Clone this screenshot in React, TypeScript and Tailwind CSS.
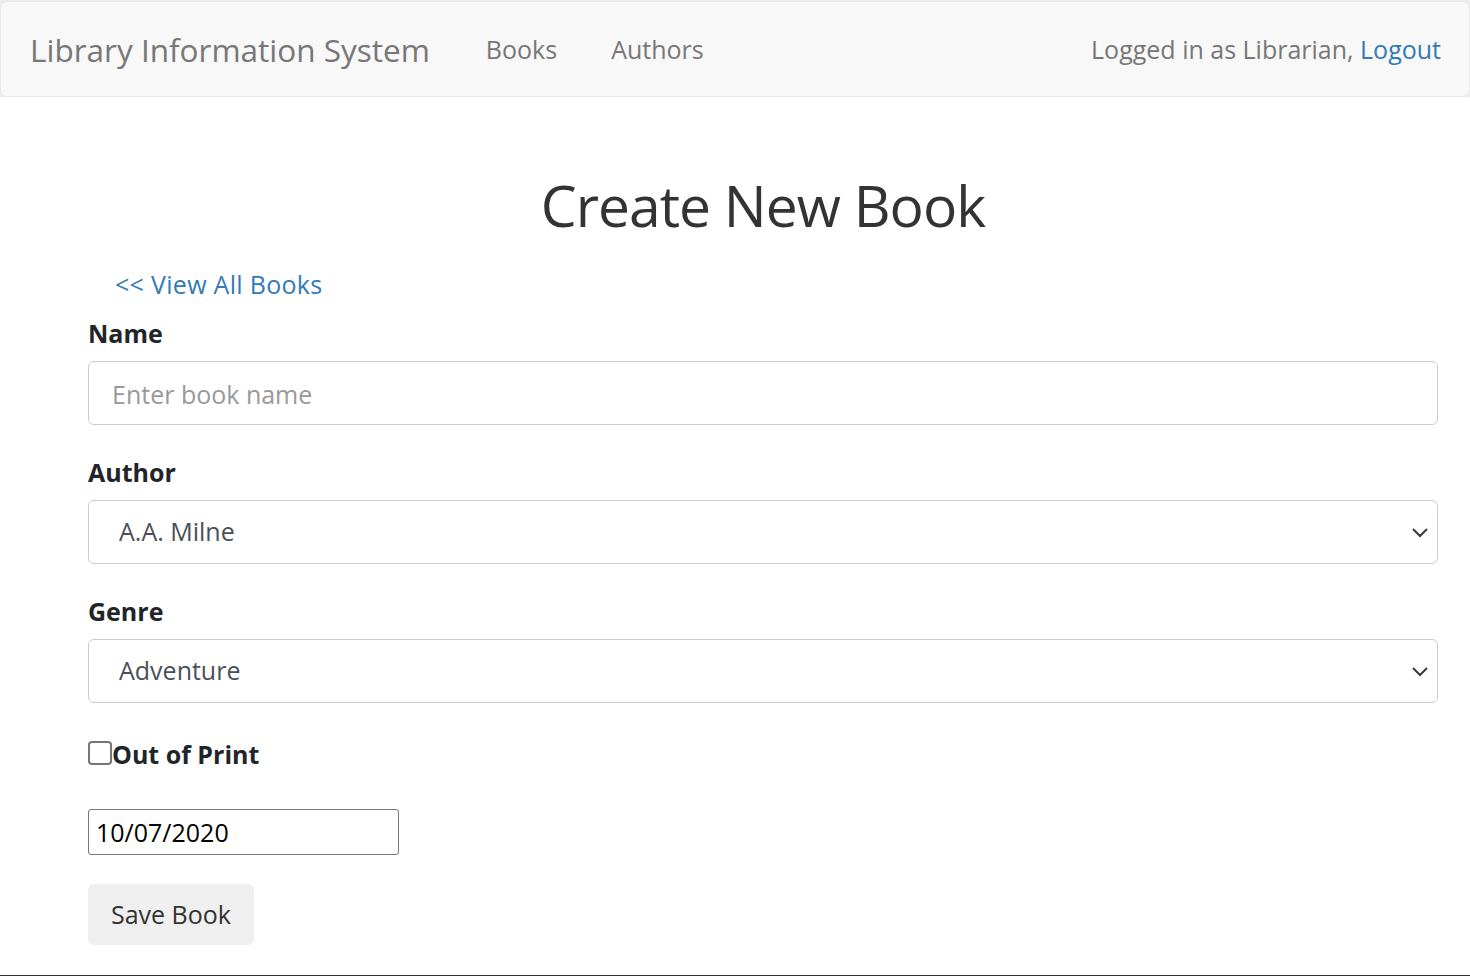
import { useState } from "react";

const font = { fontFamily: '"Open Sans", "Noto Sans", sans-serif' };

function Chevron() {
  return (
    <svg
      width="18"
      height="12"
      viewBox="0 0 18 12"
      className="pointer-events-none absolute right-[9px] top-1/2 -translate-y-1/2"
    >
      <path d="M2 3 L9 10 L16 3" fill="none" stroke="#343a40" strokeWidth="2" />
    </svg>
  );
}

export default function App() {
  const [name, setName] = useState<string>("");
  const [author, setAuthor] = useState<string>("A.A. Milne");
  const [genre, setGenre] = useState<string>("Adventure");
  const [outOfPrint, setOutOfPrint] = useState<boolean>(false);

  return (
    <div className="min-h-[976px] bg-white text-[#333] border-b border-[#333]" style={font}>
      {/* navbar */}
      <div className="pt-[1px] bg-[#ececec]">
        <nav className="h-[96px] bg-[#f8f8f8] border border-[#e7e7e7] rounded-[7px] flex items-center pl-[29px] pr-[28px] pt-[2px]">
          <span className="text-[31.5px] text-[#777] mr-[56px]">Library Information System</span>
          <a className="text-[25px] text-[#777] mr-[54px]">Books</a>
          <a className="text-[25px] text-[#777]">Authors</a>
          <span className="ml-auto text-[25px] text-[#777]">
            Logged in as Librarian, <a className="text-[#337ab7]">Logout</a>
          </span>
        </nav>
      </div>

      {/* form */}
      <div className="ml-[88px] mr-[32px]">
        <h1 className="text-[57px] leading-[68px] tracking-[-1px] text-center mt-[74px] mb-[28px] text-[#333]">
          Create New Book
        </h1>

        <a className="block ml-[27px] text-[25px] leading-[35px] tracking-[0.3px] text-[#337ab7] mb-[14px]">
          &lt;&lt; View All Books
        </a>

        <div className="mb-[30px]">
          <label className="block font-bold text-[25px] leading-[35px] mb-[10px] text-[#212529]">Name</label>
          <input
            value={name}
            onChange={(e) => setName(e.target.value)}
            placeholder="Enter book name"
            className="w-full h-[64px] border border-[#ccc] rounded-[6px] px-[23px] pt-[2px] text-[25px] text-[#495057] placeholder:text-[#999] outline-none"
          />
        </div>

        <div className="mb-[30px]">
          <label className="block font-bold text-[25px] leading-[35px] mb-[10px] text-[#212529]">Author</label>
          <div className="relative">
            <select
              value={author}
              onChange={(e) => setAuthor(e.target.value)}
              className="w-full h-[64px] appearance-none bg-white border border-[#ccc] rounded-[6px] px-[30px] text-[25px] text-[#495057] outline-none"
            >
              <option>A.A. Milne</option>
              <option>J.K. Rowling</option>
            </select>
            <Chevron />
          </div>
        </div>

        <div className="mb-[34px]">
          <label className="block font-bold text-[25px] leading-[35px] mb-[10px] text-[#212529]">Genre</label>
          <div className="relative">
            <select
              value={genre}
              onChange={(e) => setGenre(e.target.value)}
              className="w-full h-[64px] appearance-none bg-white border border-[#ccc] rounded-[6px] px-[30px] text-[25px] text-[#495057] outline-none"
            >
              <option>Adventure</option>
              <option>Fantasy</option>
            </select>
            <Chevron />
          </div>
        </div>

        <div className="flex items-center h-[35px] mb-[37px]">
          <input
            type="checkbox"
            checked={outOfPrint}
            onChange={(e) => setOutOfPrint(e.target.checked)}
            className="appearance-none w-[24px] h-[24px] border-2 border-[#767676] rounded-[4px] bg-white mb-[3px]"
          />
          <label className="font-bold text-[25px] leading-[35px] text-[#212529]">Out of Print</label>
        </div>

        <input
          type="text"
          defaultValue="10/07/2020"
          className="block w-[311px] h-[46px] border border-[#767676] rounded-[3px] px-[7px] text-[25px] text-black outline-none mb-[29px]"
        />

        <button className="h-[61px] px-[23px] bg-[#efefef] rounded-[6px] text-[25px] text-[#333]">Save Book</button>
      </div>
    </div>
  );
}
